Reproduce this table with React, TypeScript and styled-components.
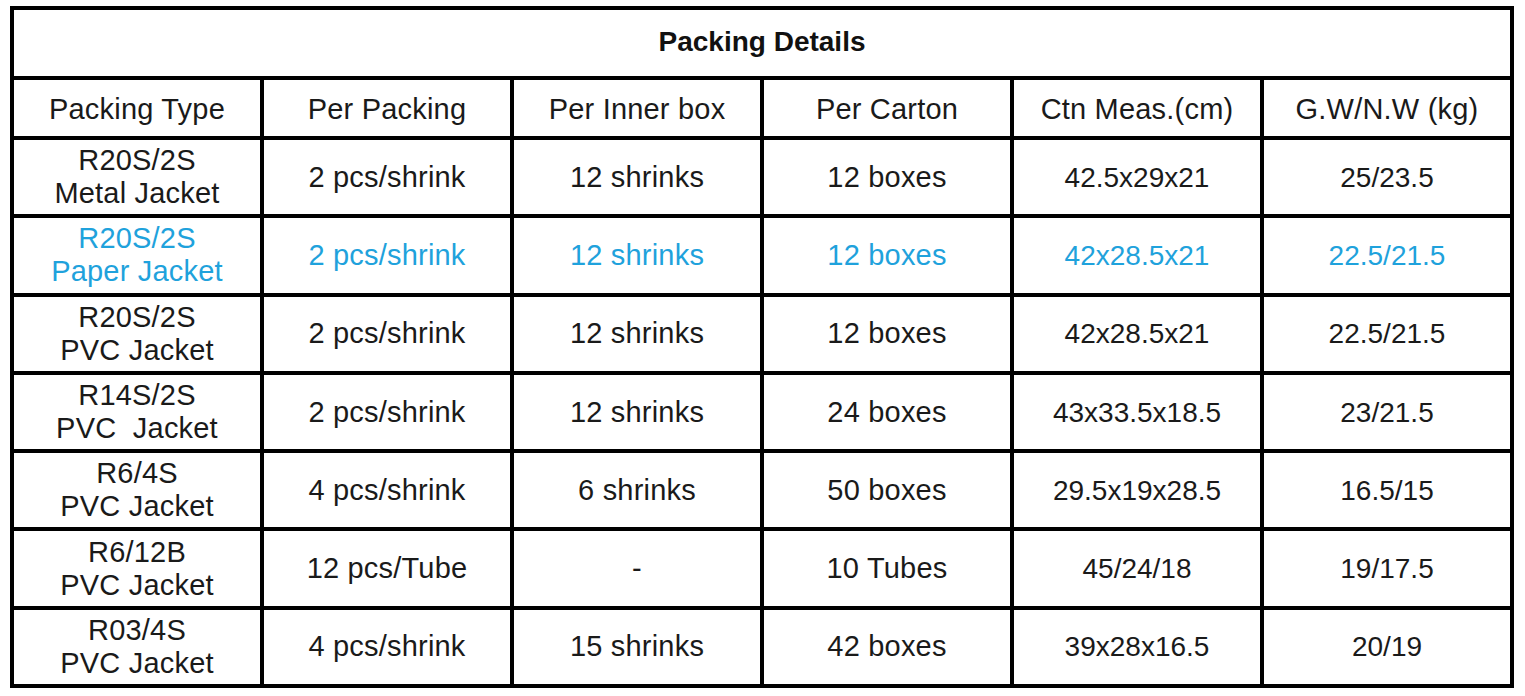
import React from "react";
import styled, { createGlobalStyle } from "styled-components";

const Global = createGlobalStyle`
  html, body { margin: 0; padding: 0; background: #ffffff; }
  body { font-family: "Liberation Sans", Arial, sans-serif; }
`;

const Page = styled.div`
  padding: 6px 0 0 10px;
`;

const Grid = styled.div`
  display: grid;
  width: 1504px;
  box-sizing: border-box;
  grid-template-columns: repeat(6, 246px);
  grid-template-rows: 66px 56px repeat(7, 74.3px);
  gap: 4px;
  padding: 4px;
  background: #000000;
`;

const TitleCell = styled.div`
  grid-column: 1 / -1;
  background: #ffffff;
  display: flex;
  align-items: center;
  justify-content: center;
  font-family: "Liberation Sans", Arial, sans-serif;
  font-weight: 700;
  font-size: 28px;
  color: #111111;
  padding-bottom: 2px;
  box-sizing: border-box;
`;

const Cell = styled.div<{ $blue?: boolean; $arial?: boolean }>`
  background: #ffffff;
  display: flex;
  flex-direction: column;
  align-items: center;
  justify-content: center;
  text-align: center;
  font-family: "Liberation Sans", Arial, sans-serif;
  font-size: ${(p) => (p.$arial ? "28px" : "29px")};
  letter-spacing: ${(p) => (p.$arial ? "0" : "0.2px")};
  line-height: 33px;
  color: ${(p) => (p.$blue ? "#1fa2dc" : "#1a1a1a")};
  white-space: pre;
`;

const HeaderCell = styled(Cell)`
  padding-top: 2px;
  box-sizing: border-box;
`;

const Line = styled.span`
  display: block;
`;

type Row = {
  type: [string, string];
  perPacking: string;
  inner: string;
  carton: string;
  meas: string;
  weight: string;
  blue?: boolean;
};

const headers = [
  "Packing Type",
  "Per Packing",
  "Per Inner box",
  "Per Carton",
  "Ctn Meas.(cm)",
  "G.W/N.W (kg)",
];

const rows: Row[] = [
  { type: ["R20S/2S", "Metal Jacket"], perPacking: "2 pcs/shrink", inner: "12 shrinks", carton: "12 boxes", meas: "42.5x29x21", weight: "25/23.5" },
  { type: ["R20S/2S", "Paper Jacket"], perPacking: "2 pcs/shrink", inner: "12 shrinks", carton: "12 boxes", meas: "42x28.5x21", weight: "22.5/21.5", blue: true },
  { type: ["R20S/2S", "PVC Jacket"], perPacking: "2 pcs/shrink", inner: "12 shrinks", carton: "12 boxes", meas: "42x28.5x21", weight: "22.5/21.5" },
  { type: ["R14S/2S", "PVC  Jacket"], perPacking: "2 pcs/shrink", inner: "12 shrinks", carton: "24 boxes", meas: "43x33.5x18.5", weight: "23/21.5" },
  { type: ["R6/4S", "PVC Jacket"], perPacking: "4 pcs/shrink", inner: "6 shrinks", carton: "50 boxes", meas: "29.5x19x28.5", weight: "16.5/15" },
  { type: ["R6/12B", "PVC Jacket"], perPacking: "12 pcs/Tube", inner: "-", carton: "10 Tubes", meas: "45/24/18", weight: "19/17.5" },
  { type: ["R03/4S", "PVC Jacket"], perPacking: "4 pcs/shrink", inner: "15 shrinks", carton: "42 boxes", meas: "39x28x16.5", weight: "20/19" },
];

export default function App() {
  return (
    <Page>
      <Global />
      <Grid>
        <TitleCell>Packing Details</TitleCell>
        {headers.map((h) => (
          <HeaderCell key={h}>{h}</HeaderCell>
        ))}
        {rows.map((r, i) => (
          <React.Fragment key={i}>
            <Cell $blue={r.blue}>
              <Line>{r.type[0]}</Line>
              <Line>{r.type[1]}</Line>
            </Cell>
            <Cell $blue={r.blue}>{r.perPacking}</Cell>
            <Cell $blue={r.blue}>{r.inner}</Cell>
            <Cell $blue={r.blue}>{r.carton}</Cell>
            <Cell $blue={r.blue} $arial>{r.meas}</Cell>
            <Cell $blue={r.blue} $arial>{r.weight}</Cell>
          </React.Fragment>
        ))}
      </Grid>
    </Page>
  );
}
